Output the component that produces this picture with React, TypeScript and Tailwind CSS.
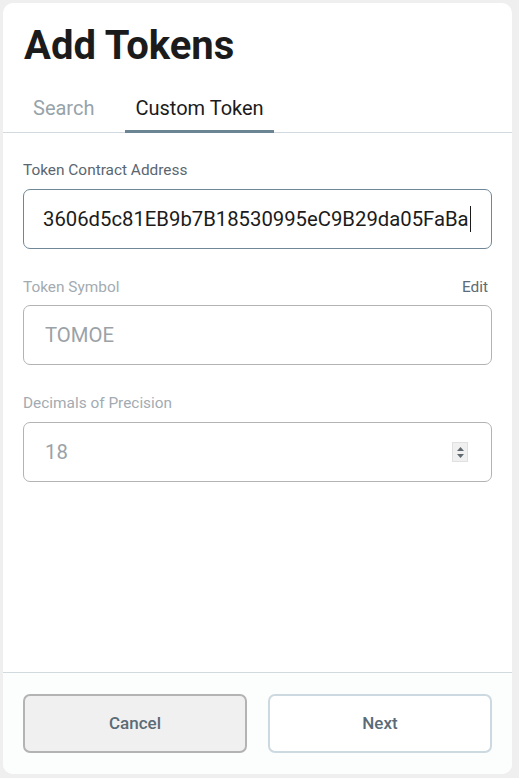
import React from "react";

export default function App() {
  return (
    <div className="w-[519px] h-[778px] bg-[#efefef] p-[3px] pr-[7px] pb-[4px]" style={{ fontFamily: "Roboto, 'Liberation Sans', sans-serif" }}>
      <div className="h-full bg-white rounded-[10px] flex flex-col overflow-hidden">
        <div className="px-[21px] pt-[20px]">
          <h1 className="text-[40px] leading-[46px] font-bold text-[#1b1b1b]">Add Tokens</h1>
        </div>
        <div className="flex border-b border-[#d3dadf] mt-[27px] px-[20px]">
          <div className="px-[10px] pb-[10px] text-[20px] leading-[24px] text-[#97a3ab]">Search</div>
          <div className="ml-[21px] px-[10px] pb-[10px] text-[20px] leading-[24px] text-[#1b1b1b] border-b-[3px] border-[#6b8595] -mb-px">Custom Token</div>
        </div>
        <div className="flex-1 px-[20px] pt-[28px]">
          <div className="text-[15.4px] leading-[18px] text-[#5a6670]">Token Contract Address</div>
          <div className="mt-[10px] h-[60px] rounded-[7px] border border-[#6f8797] flex items-center px-[19px] text-[20.3px] text-[#1b1b1b]">
            <span>3606d5c81EB9b7B18530995eC9B29da05FaBa</span>
            <span className="w-px h-[26px] bg-[#1b1b1b] ml-px" />
          </div>
          <div className="mt-[29px] flex justify-between text-[15.4px] leading-[18px]">
            <span className="text-[#a3abb1]">Token Symbol</span>
            <span className="text-[#5b6b77] mr-[4px]">Edit</span>
          </div>
          <div className="mt-[9px] h-[60px] rounded-[7px] border border-[#b3b3b3] flex items-center px-[21px] text-[20.3px] text-[#9ba2a7]">
            TOMOE
          </div>
          <div className="mt-[29px] text-[15.4px] leading-[18px] text-[#a3abb1]">Decimals of Precision</div>
          <div className="mt-[10px] h-[60px] rounded-[7px] border border-[#b3b3b3] flex items-center justify-between pl-[21px] pr-[23px] text-[20.3px] text-[#9ba2a7]">
            <span>18</span>
            <div className="w-[16px] h-[20px] bg-[#f0f0f0] border border-[#e0e0e0] flex flex-col items-center justify-center gap-[3px]">
              <svg width="7" height="4" viewBox="0 0 7 4"><path d="M0 4 L3.5 0 L7 4 Z" fill="#606a70" /></svg>
              <svg width="7" height="4" viewBox="0 0 7 4"><path d="M0 0 L3.5 4 L7 0 Z" fill="#606a70" /></svg>
            </div>
          </div>
        </div>
        <div className="border-t border-[#d3dadf] bg-[#fcfdfd] px-[20px] pt-[21px] pb-[21px] flex gap-[21px]">
          <button className="flex-1 h-[59px] rounded-[7px] border-2 border-[#b3b3b3] bg-[#f0f0f0] text-[17px] font-medium text-[#5a6b77]">Cancel</button>
          <button className="flex-1 h-[59px] rounded-[7px] border-2 border-[#cdd9e0] bg-white text-[17px] font-medium text-[#5a6b77]">Next</button>
        </div>
      </div>
    </div>
  );
}
